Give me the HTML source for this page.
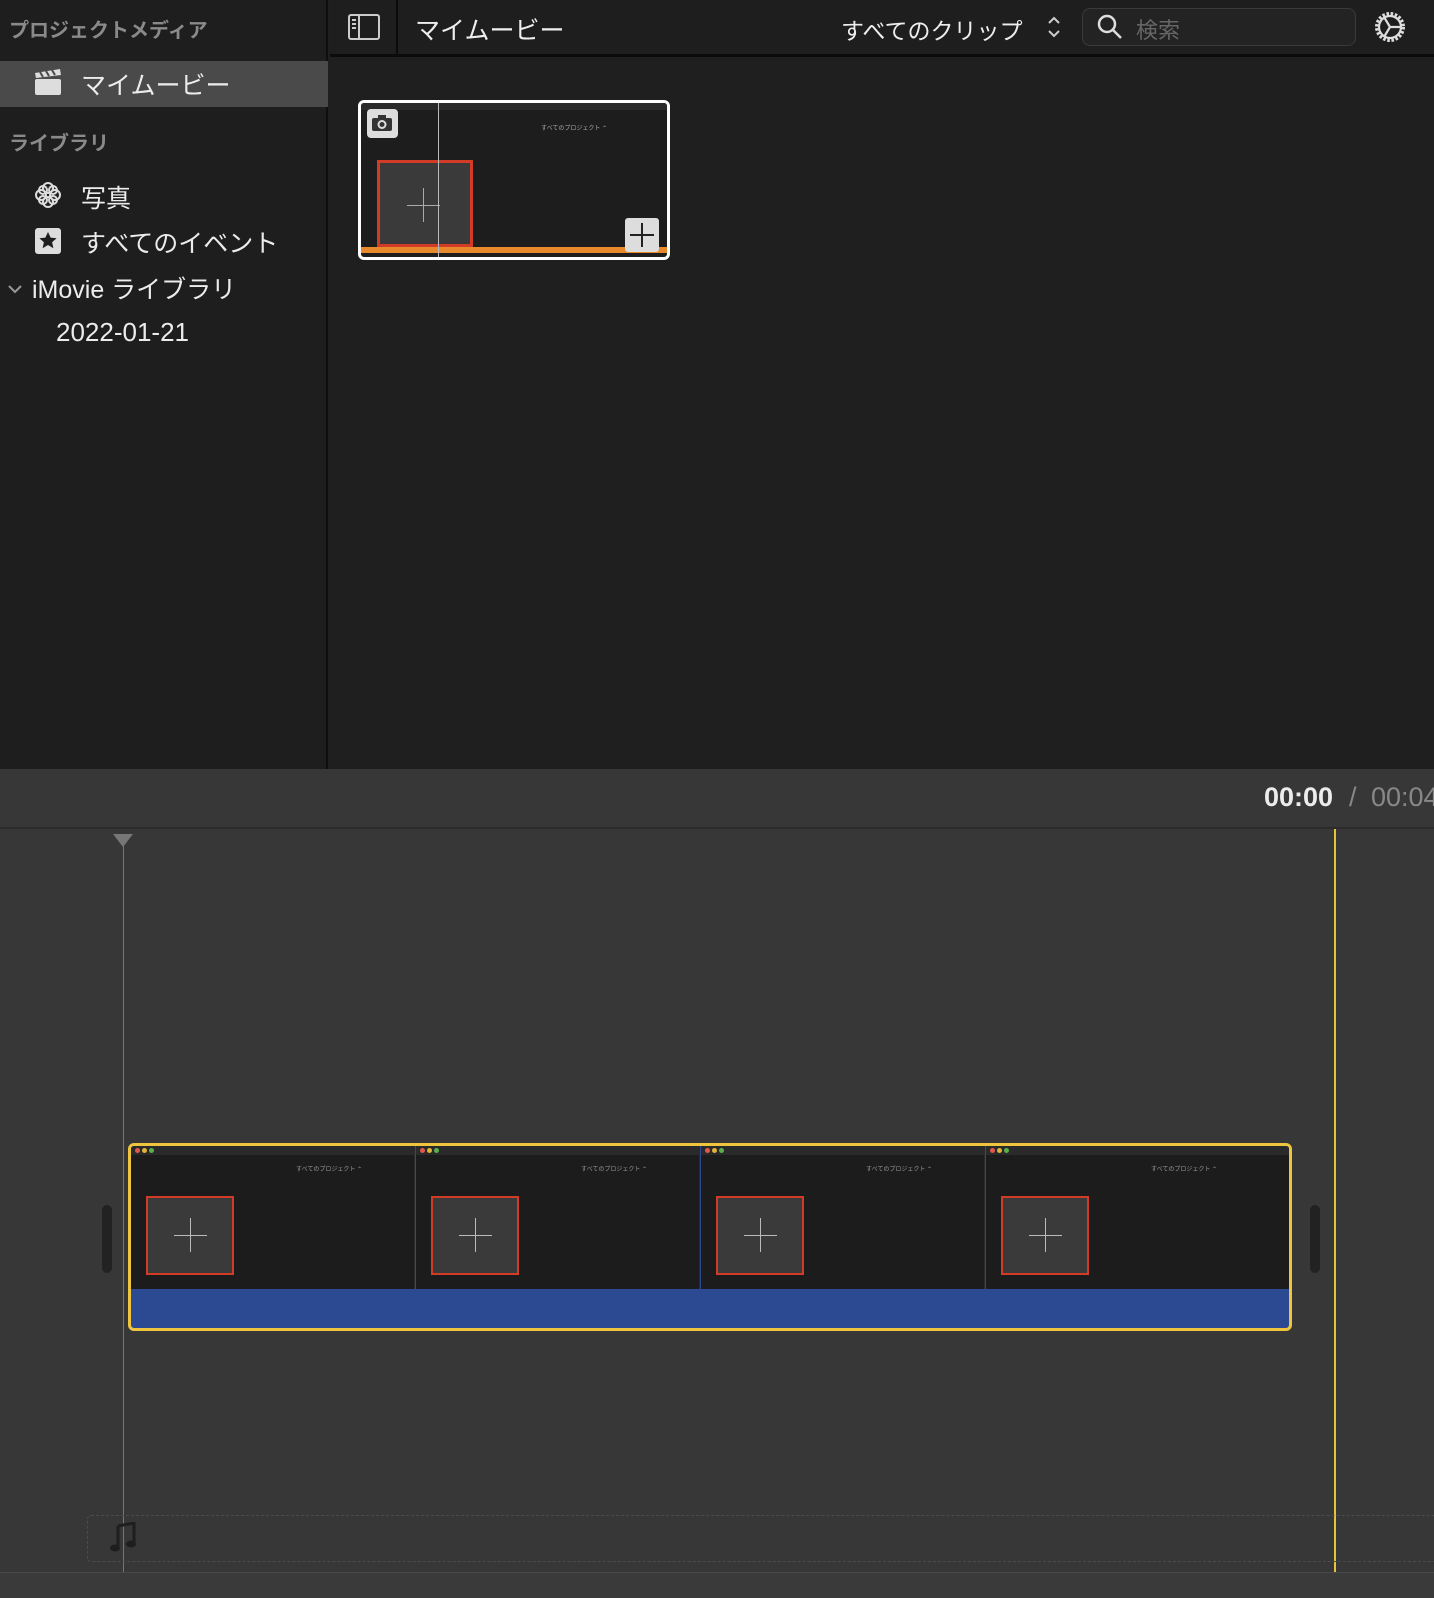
<!DOCTYPE html>
<html><head><meta charset="utf-8"><style>
*{margin:0;padding:0;box-sizing:border-box}
body{width:1434px;height:1598px;background:#1f1f1f;position:relative;overflow:hidden;font-family:"Liberation Sans","Noto Sans CJK JP",sans-serif;color:#e6e6e6}
.a{position:absolute}
.side{left:0;top:0;width:328px;height:769px;background:#1e1e1e;border-right:2px solid #0e0e0e}
.hdr{left:330px;top:0;width:1104px;height:57px;background:#1e1e1e;border-bottom:3px solid #0b0b0b}
.sec{font-size:20px;color:#8a8a8a;font-weight:bold}
.item{font-size:25px;color:#ececec}
.frame{position:absolute;top:0;width:284px;height:143px;background:#1c1c1c;border-right:1px solid #2a2a2a}
.frame .bar{position:absolute;left:0;top:0;right:0;height:9px;background:#2a2a2a}
.frame .bar:before{content:"";position:absolute;left:4px;top:2px;width:5px;height:5px;border-radius:3px;background:#e05a4a;box-shadow:7px 0 #e0b43a,14px 0 #5ab04a}
.frame .box{position:absolute;left:15px;top:50px;width:88px;height:79px;border:2px solid #d23b25;background:#3a3a3a}
.frame .box:before{content:"";position:absolute;left:42px;top:20px;width:1px;height:34px;background:#bbb}
.frame .box:after{content:"";position:absolute;left:26px;top:37px;width:33px;height:1px;background:#bbb}
.frame .t{position:absolute;left:165px;top:18px;font-size:6px;color:#999}
</style></head><body>
<div class="a side">
 <div class="a sec" style="left:9px;top:14px">プロジェクトメディア</div>
 <div class="a" style="left:0;top:61px;width:328px;height:46px;background:#4a4a4a"></div>
 <svg class="a" style="left:34px;top:68px" width="28" height="28" viewBox="0 0 28 28"><rect x="1" y="11" width="26" height="16" rx="2" fill="#ddd"/><path d="M1 5 L26 1 L27 7 L2 10Z" fill="#ddd"/><path d="M6 4l3 5M12 3l3 5M18 2l3 5" stroke="#4a4a4a" stroke-width="2"/></svg>
 <div class="a item" style="left:81px;top:66px">マイムービー</div>
 <div class="a sec" style="left:9px;top:127px">ライブラリ</div>
 <svg class="a" style="left:34px;top:181px" width="28" height="28" viewBox="0 0 28 28" fill="none" stroke="#ddd" stroke-width="2"><circle cx="14" cy="7" r="5"/><circle cx="14" cy="21" r="5"/><circle cx="7" cy="14" r="5"/><circle cx="21" cy="14" r="5"/><circle cx="9" cy="9" r="4"/><circle cx="19" cy="19" r="4"/><circle cx="19" cy="9" r="4"/><circle cx="9" cy="19" r="4"/></svg>
 <div class="a item" style="left:81px;top:179px">写真</div>
 <svg class="a" style="left:34px;top:227px" width="28" height="28" viewBox="0 0 28 28"><rect x="1" y="1" width="26" height="26" rx="3" fill="#ddd"/><path d="M14 5l2.6 5.6 6 .6-4.5 4 1.3 6L14 18l-5.4 3.2 1.3-6-4.5-4 6-.6z" fill="#1e1e1e"/></svg>
 <div class="a item" style="left:81px;top:224px">すべてのイベント</div>
 <svg class="a" style="left:7px;top:283px" width="16" height="12" viewBox="0 0 16 12"><path d="M2 3l6 6 6-6" stroke="#999" stroke-width="2" fill="none"/></svg>
 <div class="a item" style="left:32px;top:270px">iMovie ライブラリ</div>
 <div class="a item" style="left:56px;top:317px;font-size:26px">2022-01-21</div>
</div>
<div class="a hdr">
 <div class="a" style="left:66px;top:0;width:2px;height:57px;background:#0b0b0b"></div>
 <svg class="a" style="left:18px;top:14px" width="32" height="26" viewBox="0 0 32 26" fill="none" stroke="#ccc" stroke-width="2"><rect x="1" y="1" width="30" height="24" rx="2"/><path d="M11 1v24M4 6h4M4 10h4M4 14h4"/></svg>
 <div class="a" style="left:85px;top:11px;font-size:25px;color:#eee">マイムービー</div>
 <div class="a" style="left:511px;top:12px;font-size:23px;color:#eee">すべてのクリップ</div>
 <svg class="a" style="left:716px;top:14px" width="16" height="26" viewBox="0 0 16 26" fill="none" stroke="#ccc" stroke-width="2"><path d="M3 9l5-5 5 5M3 17l5 5 5-5"/></svg>
 <div class="a" style="left:752px;top:8px;width:274px;height:38px;border:1px solid #3a3a3a;border-radius:8px;background:#232323"></div>
 <svg class="a" style="left:766px;top:13px" width="28" height="28" viewBox="0 0 28 28" fill="none" stroke="#ddd" stroke-width="2.5"><circle cx="11" cy="11" r="8"/><path d="M17 17l8 8"/></svg>
 <div class="a" style="left:806px;top:13px;font-size:22px;color:#666">検索</div>
 <svg class="a" style="left:1042px;top:9px" width="36" height="36" viewBox="0 0 36 36" fill="none" stroke="#ddd" stroke-width="2.2"><circle cx="18" cy="18" r="13" stroke-dasharray="2.5 1.6" stroke-width="4"/><circle cx="18" cy="18" r="11"/><path d="M18 18L12 8M18 18h11M18 18l-6 10"/></svg>
</div>
<!-- thumbnail -->
<div class="a" style="left:358px;top:100px;width:312px;height:160px;border:3px solid #fff;border-radius:6px;background:#1d1d1d;overflow:hidden">
 <div class="a" style="left:0;top:0;width:306px;height:7px;background:#2b2b2b"></div>
 <div class="a" style="left:6px;top:6px;width:31px;height:29px;background:#ddd;border-radius:4px"></div>
 <svg class="a" style="left:10px;top:11px" width="22" height="18" viewBox="0 0 22 18"><rect x="1" y="4" width="20" height="13" rx="2" fill="#333"/><rect x="7" y="1" width="8" height="4" fill="#333"/><circle cx="11" cy="10.5" r="3.5" fill="none" stroke="#ddd" stroke-width="2"/></svg>
 <div class="a" style="left:16px;top:57px;width:96px;height:87px;border:3px solid #d23b25;background:#3a3a3a"></div>
 <div class="a" style="left:62px;top:85px;width:1px;height:34px;background:#aaa"></div>
 <div class="a" style="left:46px;top:102px;width:33px;height:1px;background:#aaa"></div>
 <div class="a" style="left:0;top:144px;width:306px;height:6px;background:#e8892b"></div>
 <div class="a" style="left:264px;top:115px;width:34px;height:34px;background:#ddd;border-radius:3px"></div>
 <div class="a" style="left:280px;top:120px;width:2px;height:24px;background:#222"></div>
 <div class="a" style="left:269px;top:131px;width:24px;height:2px;background:#222"></div>
 <div class="a" style="left:180px;top:20px;font-size:6px;color:#aaa">すべてのプロジェクト ⌃</div>
 <div class="a" style="left:77px;top:0;width:1px;height:160px;background:#bbb"></div>
</div>
<!-- timeline -->
<div class="a" style="left:0;top:769px;width:1434px;height:829px;background:#373737"></div>
<div class="a" style="left:0;top:827px;width:1434px;height:2px;background:#2b2b2b"></div>
<div class="a" style="left:1264px;top:782px;font-size:27px;color:#ececec;font-weight:bold">00:00</div>
<div class="a" style="left:1349px;top:782px;font-size:27px;color:#888">/</div>
<div class="a" style="left:1371px;top:782px;font-size:27px;color:#888">00:04</div>
<svg class="a" style="left:113px;top:834px" width="20" height="14"><path d="M0 0h20L10 13z" fill="#777"/></svg>
<div class="a" style="left:123px;top:835px;width:1px;height:737px;background:#777"></div>
<div class="a" style="left:1334px;top:829px;width:2px;height:743px;background:#e8c33a"></div>
<div class="a" style="left:102px;top:1205px;width:10px;height:68px;background:#222;border-radius:5px"></div>
<div class="a" style="left:1310px;top:1205px;width:10px;height:68px;background:#222;border-radius:5px"></div>
<div class="a" style="left:128px;top:1143px;width:1164px;height:188px;border:3px solid #f0c53e;border-radius:6px;overflow:hidden;background:#2b4a92">
 <div class="frame" style="left:0"><div class="bar"></div><div class="t">すべてのプロジェクト ⌃</div><div class="box"></div></div>
 <div class="frame" style="left:285px"><div class="bar"></div><div class="t">すべてのプロジェクト ⌃</div><div class="box"></div></div>
 <div class="frame" style="left:570px"><div class="bar"></div><div class="t">すべてのプロジェクト ⌃</div><div class="box"></div></div>
 <div class="frame" style="left:855px;width:305px"><div class="bar"></div><div class="t">すべてのプロジェクト ⌃</div><div class="box"></div></div>
</div>
<div class="a" style="left:87px;top:1515px;width:1360px;height:47px;border:1px dashed #4c4c4c;border-radius:4px"></div>
<svg class="a" style="left:110px;top:1522px" width="26" height="30" viewBox="0 0 26 30"><path d="M8 4l16-3v20" stroke="#1e1e1e" stroke-width="3" fill="none"/><path d="M8 4v22" stroke="#1e1e1e" stroke-width="3"/><ellipse cx="5" cy="26" rx="5" ry="3.5" fill="#1e1e1e"/><ellipse cx="21" cy="22" rx="5" ry="3.5" fill="#1e1e1e"/></svg>
<div class="a" style="left:0;top:1572px;width:1434px;height:26px;background:#3a3a3a;border-top:1px solid #4a4a4a"></div>
</body></html>
